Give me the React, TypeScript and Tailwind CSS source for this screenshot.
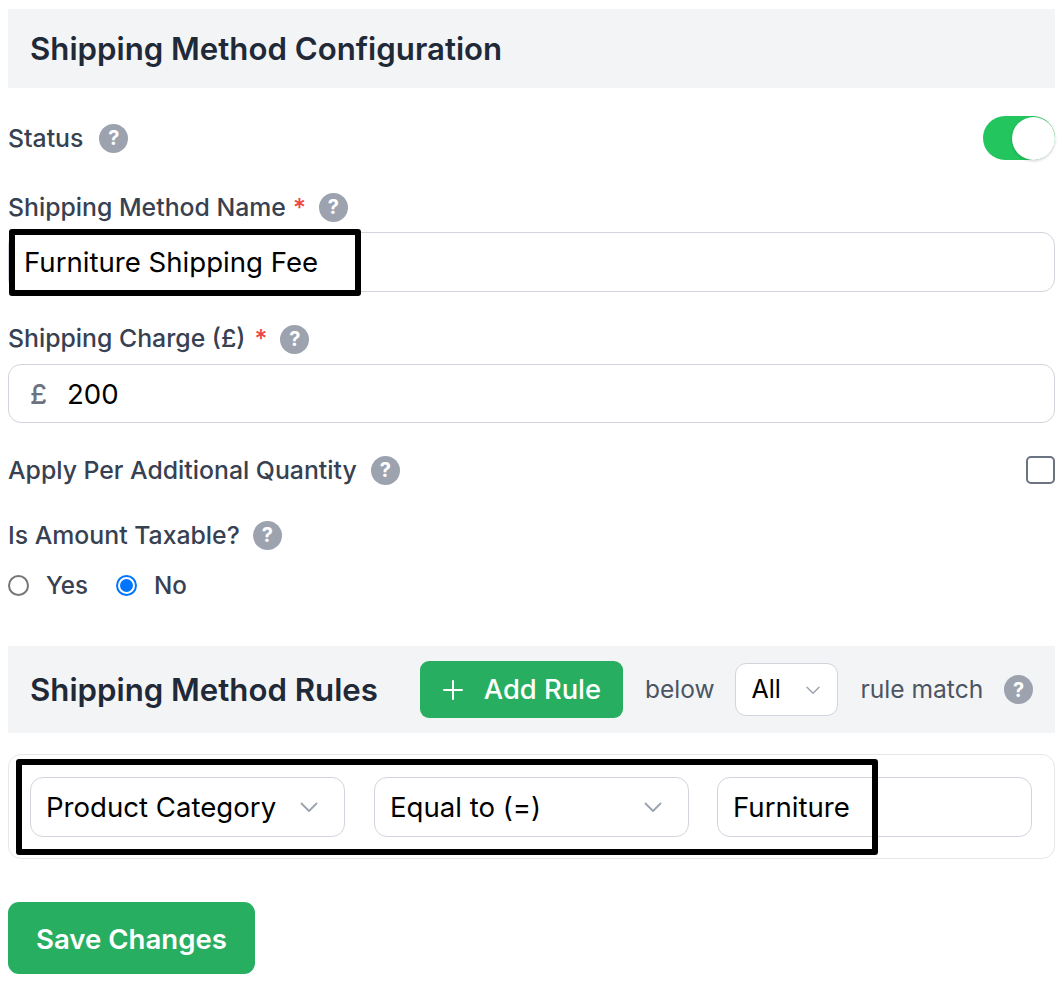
import React from "react";

function Help({ className = "" }: { className?: string }) {
  return (
    <span className={"flex h-[29px] w-[29px] shrink-0 items-center justify-center rounded-full bg-[#9ca3af] text-[20px] font-bold leading-none text-white " + className}>
      ?
    </span>
  );
}

function Chevron({ size = 20 }: { size?: number }) {
  return (
    <svg width={size} height={size} viewBox="0 0 20 20" fill="none" stroke="#9ca3af" strokeWidth="1.8" strokeLinecap="round" strokeLinejoin="round" className="shrink-0">
      <path d="M2.5 6.5l7.5 7.5 7.5-7.5" />
    </svg>
  );
}

function Field({ text, chevron, className = "" }: { text: string; chevron?: boolean; className?: string }) {
  return (
    <div className={"flex h-[60px] w-[315px] items-center justify-between rounded-[13px] border border-[#d1d5db] bg-white pl-[15px] pr-[25px] text-[27.6px] text-black " + className}>
      <span className="pt-[2px]">{text}</span>
      {chevron && <Chevron />}
    </div>
  );
}

export default function App() {
  return (
    <div className="bg-white px-2 pt-[9px] font-['Inter',sans-serif] text-[#374151] h-[984px] w-[1064px] overflow-hidden relative">
      <div className="flex h-[79px] w-[1047px] items-center bg-[#f3f4f6] pl-[22px] pt-[2px] text-[31.2px] font-semibold text-[#1f2937]">
        Shipping Method Configuration
      </div>

      <div className="mt-[35px] flex h-[30px] w-[1047px] items-center justify-between">
        <div className="flex items-center gap-[16px] text-[24.8px] font-medium">
          <span className="pt-[2px]">Status</span>
          <Help />
        </div>
        <div className="flex h-[44px] w-[72px] items-center justify-end rounded-full bg-[#22c55e]">
          <span className="h-[43px] w-[43px] rounded-full bg-white shadow-[0_1px_3px_rgba(0,0,0,0.2)]" />
        </div>
      </div>

      <div className="mt-[39px] flex h-[30px] items-center text-[24.8px] font-medium">
        <span className="pt-[2px]">Shipping Method Name</span>
        <span className="ml-[7px] pt-[2px] text-[#ef4444]">*</span>
        <Help className="ml-[13px]" />
      </div>
      <div className="mt-[10px] flex h-[60px] w-[1047px] items-center rounded-[13px] border border-[#d1d5db] pl-[15px] pt-[2px] text-[27.6px] text-black">
        Furniture Shipping Fee
      </div>

      <div className="mt-[32px] flex h-[30px] items-center text-[24.8px] font-medium">
        <span>Shipping Charge (£)</span>
        <span className="ml-[9px] text-[#ef4444]">*</span>
        <Help className="ml-[13px]" />
      </div>
      <div className="mt-[10px] flex h-[59px] w-[1047px] items-center rounded-[13px] border border-[#d1d5db] pl-[21px] pt-[2px] text-[27.6px] text-black">
        <span className="w-[37px] font-medium text-[#6b7280]">£</span>
        <span>200</span>
      </div>

      <div className="mt-[32px] flex h-[30px] w-[1047px] items-center justify-between">
        <div className="flex items-center gap-[14px] text-[24.8px] font-medium">
          <span className="pt-[2px]">Apply Per Additional Quantity</span>
          <Help />
        </div>
        <span className="h-[28px] w-[29px] rounded-[5px] border-2 border-[#6b7280]" />
      </div>

      <div className="mt-[35px] flex h-[30px] items-center gap-[13px] text-[24.8px] font-medium">
        <span className="pt-[2px]">Is Amount Taxable?</span>
        <Help />
      </div>

      <div className="mt-[20px] flex h-[30px] items-center text-[24.2px] font-medium">
        <span className="h-[21px] w-[21px] rounded-full border-2 border-[#767676]" />
        <span className="ml-[17px] pt-[2px]">Yes</span>
        <span className="ml-[28px] flex h-[21px] w-[21px] items-center justify-center rounded-full border-2 border-[#0075ff]">
          <span className="h-[13px] w-[13px] rounded-full bg-[#0075ff]" />
        </span>
        <span className="ml-[17px] pt-[2px]">No</span>
      </div>

      <div className="mt-[46px] flex h-[87px] w-[1047px] items-center bg-[#f3f4f6] pl-[22px] pr-[22px]">
        <span className="pt-[2px] text-[31.2px] font-semibold text-[#1f2937]">Shipping Method Rules</span>
        <button className="ml-[42px] flex h-[57px] w-[203px] items-center justify-center gap-[20px] rounded-[9px] bg-[#27ae60] text-[27.3px] font-medium text-white">
          <svg width="22" height="22" viewBox="0 0 22 22" fill="none" stroke="white" strokeWidth="2" strokeLinecap="round">
            <path d="M11 2v18M2 11h18" />
          </svg>
          <span className="pt-[2px]">Add Rule</span>
        </button>
        <span className="ml-[22px] text-[24.5px] text-[#4b5563]">below</span>
        <div className="ml-[21px] flex h-[53px] w-[103px] items-center justify-between rounded-[11px] border border-[#d1d5db] bg-white pl-[15px] pr-[16px] text-[25px] text-black">
          <span>All</span>
          <Chevron size={16} />
        </div>
        <span className="ml-[22px] text-[24.6px] text-[#4b5563]">rule match</span>
        <Help className="ml-auto" />
      </div>

      <div className="mt-[21px] flex h-[105px] w-[1047px] items-center gap-[29px] rounded-[13px] border border-[#e5e7eb] pl-[21px]">
        <Field text="Product Category" chevron />
        <Field text="Equal to (=)" chevron />
        <Field text="Furniture" className="-ml-px" />
      </div>

      <button className="mt-[43px] flex h-[72px] w-[247px] items-center justify-center rounded-[11px] bg-[#27ae60] pt-[3px] text-[27.6px] font-semibold text-white">
        Save Changes
      </button>

      <div className="absolute left-[9px] top-[229px] h-[67px] w-[352px] rounded-[3px] border-[6px] border-black" />
      <div className="absolute left-[16px] top-[759px] h-[96px] w-[862px] rounded-[3px] border-[6px] border-black" />
    </div>
  );
}
